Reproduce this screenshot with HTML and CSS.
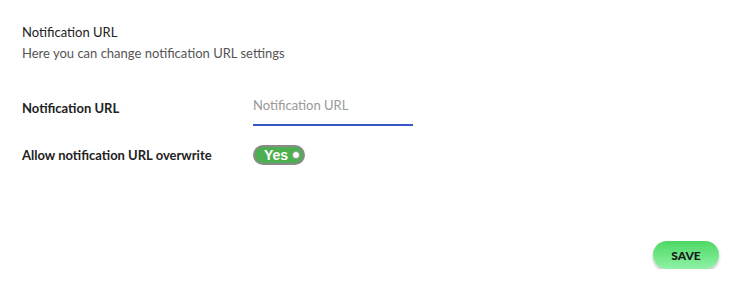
FILE: index.html
```html
<!DOCTYPE html>
<html lang="en">
<head>
<meta charset="UTF-8">
<title>Notification URL</title>
<link rel="stylesheet" href="styles.css">
</head>
<body>
<div class="panel">
  <div class="header">
    <div class="title">Notification URL</div>
    <div class="subtitle">Here you can change notification URL settings</div>
  </div>

  <div class="row">
    <label class="label" for="url">Notification URL</label>
    <input class="field" id="url" type="text" placeholder="Notification URL">
  </div>

  <div class="row row-toggle">
    <span class="label">Allow notification URL overwrite</span>
    <span class="toggle">Yes<span class="knob"></span></span>
  </div>

  <div class="actions">
    <button class="save">SAVE</button>
  </div>
</div>
</body>
</html>
```

FILE: styles.css
```css
body {
  margin: 0;
  background: #fff;
  font-family: Lato, "Open Sans", sans-serif;
  color: #222;
}
.panel {
  padding: 23px 22px 0 22px;
}
.title {
  font-size: 13px;
  line-height: 18px;
  color: #222;
}
.subtitle {
  font-size: 13px;
  line-height: 18px;
  margin-top: 3px;
  color: #555;
}
.row {
  display: flex;
  align-items: center;
  margin-top: 27px;
}
.label {
  width: 231px;
  font-size: 13px;
  font-weight: bold;
  color: #222;
}
.field {
  width: 160px;
  box-sizing: border-box;
  border: none;
  border-bottom: 2px solid #3857c8;
  padding: 8px 0 11px 0;
  font-family: Lato, sans-serif;
  font-size: 13px;
  outline: none;
  color: #222;
}
.field::placeholder { color: #999; }
.row-toggle {
  margin-top: 19px;
}
.toggle {
  display: inline-flex;
  align-items: center;
  height: 16px;
  padding: 0 3px 0 9px;
  border: 2px solid #8a8a8a;
  border-radius: 11px;
  background: #4caf50;
  color: #fff;
  font-family: "Liberation Sans", Arial, sans-serif;
  font-weight: bold;
  font-size: 14px;
}
.knob {
  width: 6px;
  height: 6px;
  margin-left: 4px;
  border-radius: 50%;
  background: #fff;
  border: 1px solid #999;
}
.actions {
  display: flex;
  justify-content: flex-end;
  margin-top: 76px;
  padding-right: 1px;
}
.save {
  width: 66px;
  height: 28px;
  border: none;
  border-radius: 14px;
  background: linear-gradient(#4cd964, #90f2a6);
  box-shadow: 0 2px 3px rgba(0,0,0,0.25);
  font-family: Lato, sans-serif;
  font-weight: 900;
  font-size: 12px;
  color: #1a1a1a;
  cursor: pointer;
}
```
